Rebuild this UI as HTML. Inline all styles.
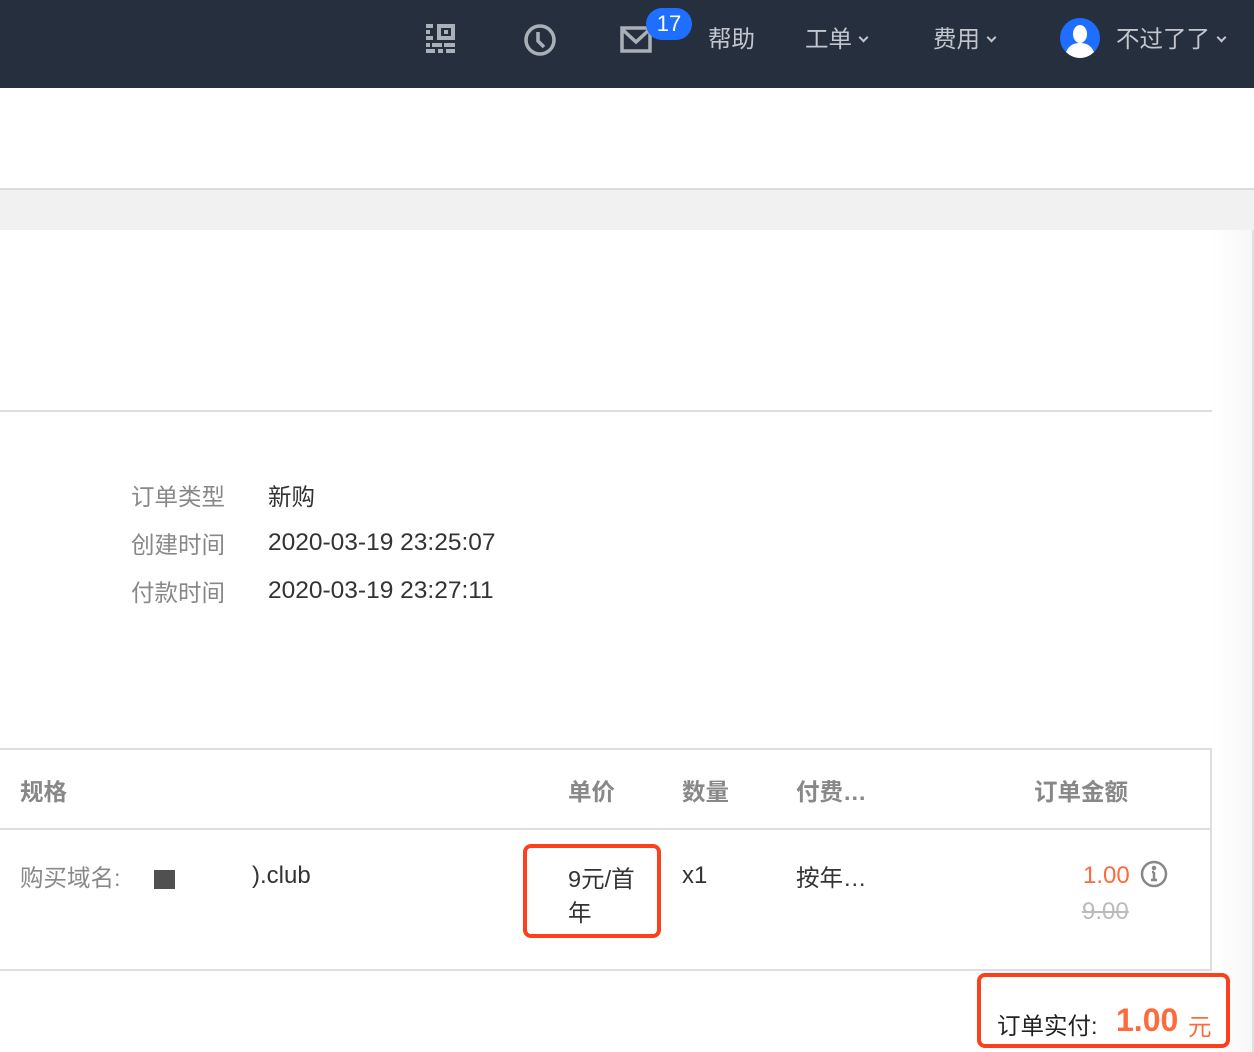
<!DOCTYPE html>
<html><head><meta charset="utf-8"><style>
*{margin:0;padding:0;box-sizing:border-box}
body{width:1254px;height:1052px;overflow:hidden;background:#fff;font-family:"Liberation Sans","Noto Sans CJK SC",sans-serif;position:relative}
.a{position:absolute;white-space:nowrap}
.hdr{position:absolute;left:0;top:0;width:1254px;height:88px;background:#262f3e}
.nav{color:#c3c7cd;font-size:23.5px;top:20px}
.chev{display:inline-block;width:7px;height:7px;border-right:2px solid #c3c7cd;border-bottom:2px solid #c3c7cd;transform:rotate(45deg);margin-left:8px;vertical-align:6px}
.lbl{color:#888;font-size:23.5px}
.val{color:#333;font-size:23.5px}
.th{color:#888;font-size:23.5px;font-weight:bold;top:773px}
</style></head><body>
<div class="hdr"></div>
<svg class="a" style="left:426px;top:24px" width="29" height="29" viewBox="0 0 29 29" fill="#aab0b7">
<rect x="0" y="0" width="7" height="4"/><rect x="0" y="6" width="4" height="4"/><rect x="0" y="12" width="7" height="4"/>
<path d="M11 0h18v16h-18zM15 4v8h10v-8z"/><rect x="18" y="6" width="4" height="4"/>
<rect x="0" y="19" width="4" height="4"/><rect x="6" y="19" width="10" height="4"/><rect x="18" y="19" width="11" height="4"/>
<rect x="0" y="25" width="9" height="4"/><rect x="12" y="25" width="5" height="4"/><rect x="20" y="25" width="9" height="4"/>
</svg>
<svg class="a" style="left:523px;top:23px" width="34" height="34" viewBox="0 0 34 34" fill="none" stroke="#aab0b7" stroke-width="3.5">
<circle cx="17" cy="17" r="14"/><path d="M15 9v9l6 6"/></svg>
<svg class="a" style="left:620px;top:26px" width="32" height="27" viewBox="0 0 32 27" fill="none" stroke="#aab0b7" stroke-width="3.5">
<rect x="2" y="2" width="28" height="23"/><path d="M3 4l13 12 13-12"/></svg>
<div class="a" style="left:646px;top:8px;width:46px;height:32px;border-radius:16px;background:#1e6fff;color:#fff;font-size:22px;text-align:center;line-height:32px">17</div>
<div class="a nav" style="left:708px">帮助</div>
<div class="a nav" style="left:805px">工单<span class="chev"></span></div>
<div class="a nav" style="left:933px">费用<span class="chev"></span></div>
<svg class="a" style="left:1060px;top:18px" width="40" height="40" viewBox="0 0 40 40">
<circle cx="20" cy="20" r="20" fill="#1e6fff"/><ellipse cx="20" cy="16" rx="7" ry="9" fill="#fff"/><path d="M6 34c3-7 8-9 14-9s11 2 14 9c-4 4-9 6-14 6s-10-2-14-6z" fill="#fff"/></svg>
<div class="a nav" style="left:1116px">不过了了<span class="chev"></span></div>

<div class="a" style="left:0;top:188px;width:1254px;height:2px;background:#dcdcdc"></div>
<div class="a" style="left:0;top:190px;width:1254px;height:40px;background:#f1f1f1"></div>
<div class="a" style="left:1212px;top:230px;width:42px;height:822px;background:linear-gradient(90deg,#fff,#f7f7f7)"></div>
<div class="a" style="left:1252px;top:230px;width:2px;height:822px;background:#e0e0e0"></div>
<div class="a" style="left:0;top:410px;width:1212px;height:2px;background:#dedede"></div>

<div class="a lbl" style="left:131px;top:478px">订单类型</div><div class="a val" style="left:268px;top:478px">新购</div>
<div class="a lbl" style="left:131px;top:526px">创建时间</div><div class="a val" style="left:268px;top:529px;font-size:24.5px">2020-03-19 23:25:07</div>
<div class="a lbl" style="left:131px;top:574px">付款时间</div><div class="a val" style="left:268px;top:577px;font-size:24.5px">2020-03-19 23:27:11</div>

<div class="a" style="left:0;top:748px;width:1212px;height:223px;border:2px solid #dedede;border-left:none;background:#fff"></div>
<div class="a" style="left:0;top:828px;width:1211px;height:2px;background:#dedede"></div>
<div class="a th" style="left:20px">规格</div>
<div class="a th" style="left:568px">单价</div>
<div class="a th" style="left:682px">数量</div>
<div class="a th" style="left:796px">付费…</div>
<div class="a th" style="left:1034px">订单金额</div>

<div class="a lbl" style="left:20px;top:859px">购买域名:</div>
<div class="a" style="left:154px;top:870px;width:21px;height:19px;background:#505050"></div>
<div class="a val" style="left:252px;top:862px;font-size:24px">).club</div>
<div class="a" style="left:523px;top:844px;width:138px;height:94px;border:4px solid #fc3f1d;border-radius:8px"></div>
<div class="a val" style="left:568px;top:860px">9元/首</div>
<div class="a val" style="left:568px;top:894px">年</div>
<div class="a val" style="left:682px;top:862px;font-size:24px">x1</div>
<div class="a val" style="left:796px;top:859px">按年…</div>
<div class="a" style="left:1083px;top:862px;color:#ff6a3d;font-size:24px">1.00</div>
<svg class="a" style="left:1140px;top:860px" width="28" height="28" viewBox="0 0 28 28" fill="none" stroke="#888" stroke-width="2.5">
<circle cx="14" cy="14" r="12"/><path d="M14 12v8M11 20h6M12 12h2"/><circle cx="14" cy="8" r="1" fill="#888"/></svg>
<div class="a" style="left:1082px;top:898px;color:#bbb;font-size:24px;text-decoration:line-through">9.00</div>

<div class="a" style="left:977px;top:973px;width:253px;height:75px;border:4px solid #fc3f1d;border-radius:8px;background:#fff"></div>
<div class="a" style="left:997px;top:1007px;color:#222;font-size:23.5px">订单实付:</div>
<div class="a" style="left:1116px;top:1002px;color:#ff6a3d;font-size:32px;font-weight:bold">1.00</div>
<div class="a" style="left:1188px;top:1008px;color:#ff6a3d;font-size:23.5px">元</div>
</body></html>
